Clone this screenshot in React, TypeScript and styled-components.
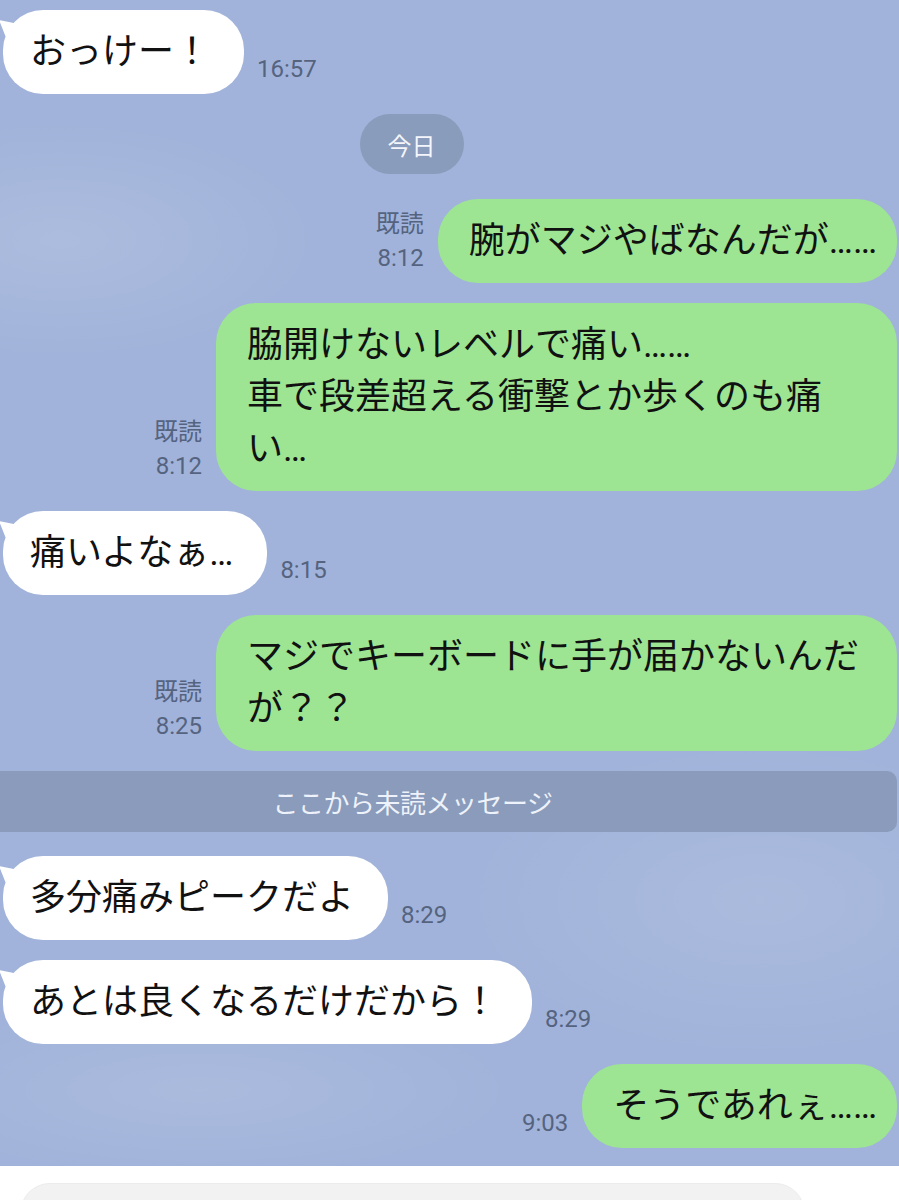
import React from 'react';
import styled, { createGlobalStyle } from 'styled-components';

const GlobalStyle = createGlobalStyle`
  html, body { margin: 0; padding: 0; background: #ffffff; }
  body { font-family: Roboto, "Noto Sans CJK JP", sans-serif; }
  * { box-sizing: border-box; }
`;

const Screen = styled.div`
  width: 899px;
  height: 1200px;
  overflow: hidden;
  display: flex;
  flex-direction: column;
  background: #ffffff;
`;

const Chat = styled.main`
  display: flex;
  flex-direction: column;
  gap: 20px;
  padding: 10px 0 18px;
  background:
    radial-gradient(ellipse 260px 120px at 60px 240px, rgba(255, 255, 255, 0.12), transparent),
    radial-gradient(ellipse 300px 160px at 760px 900px, rgba(255, 255, 255, 0.1), transparent),
    radial-gradient(ellipse 320px 90px at 200px 1090px, rgba(255, 255, 255, 0.1), transparent),
    #a1b3da;
`;

const Row = styled.div<{ $side: 'left' | 'right' }>`
  display: flex;
  align-items: flex-end;
  justify-content: ${(p) => (p.$side === 'left' ? 'flex-start' : 'flex-end')};
  gap: ${(p) => (p.$side === 'left' ? '13px' : '14px')};
  padding-right: ${(p) => (p.$side === 'right' ? '2px' : '0')};
`;

const Bubble = styled.div<{ $side: 'left' | 'right' }>`
  position: relative;
  max-width: 681px;
  font-size: 36px;
  line-height: 52px;
  color: #111111;
  border-radius: 40px;
  background: ${(p) => (p.$side === 'left' ? '#ffffff' : '#9de592')};
  margin-left: ${(p) => (p.$side === 'left' ? '3px' : '0')};
  padding: ${(p) => (p.$side === 'left' ? '16px 34px 16px 27px' : '16px 20px 16px 31px')};
  line-break: strict;

  ${(p) =>
    p.$side === 'left'
      ? `&::before {
          content: '';
          position: absolute;
          left: -4px;
          top: 10px;
          width: 16px;
          height: 16px;
          background: #ffffff;
          clip-path: polygon(0 0, 100% 20%, 100% 100%, 40% 100%);
        }`
      : ''}
`;

const Meta = styled.div`
  display: flex;
  flex-direction: column;
  align-items: flex-end;
  font-size: 24px;
  line-height: 34px;
  color: #55637f;
  margin-bottom: 8px;
  white-space: nowrap;
`;

const DateRow = styled.div`
  display: flex;
  justify-content: center;
  padding-right: 76px;
  margin-bottom: 5px;
`;

const DatePill = styled.div`
  width: 104px;
  height: 60px;
  border-radius: 30px;
  background: #8a9cbc;
  color: #f4f6fb;
  font-size: 24px;
  display: flex;
  align-items: center;
  justify-content: center;
`;

const Divider = styled.div`
  height: 61px;
  margin: 0 2px 4px 0;
  border-radius: 0 10px 10px 0;
  background: #8a9bbb;
  color: #eef2fa;
  font-size: 26px;
  letter-spacing: -0.5px;
  display: flex;
  align-items: center;
  justify-content: center;
  padding-right: 72px;
`;

const Footer = styled.footer`
  flex: 1;
  background: #ffffff;
  padding: 17px 94px 0 20px;
`;

const InputBox = styled.div`
  height: 60px;
  border-radius: 30px 30px 0 0;
  background: #f2f2f2;
  border: 1px solid #ececec;
`;

type Msg =
  | { kind: 'left'; text: string; time: string }
  | { kind: 'right'; text: string; time: string; read: boolean }
  | { kind: 'date'; text: string }
  | { kind: 'divider'; text: string };

const messages: Msg[] = [
  { kind: 'left', text: 'おっけー！', time: '16:57' },
  { kind: 'date', text: '今日' },
  { kind: 'right', text: '腕がマジやばなんだが……', time: '8:12', read: true },
  { kind: 'right', text: '脇開けないレベルで痛い……\n車で段差超える衝撃とか歩くのも痛い…', time: '8:12', read: true },
  { kind: 'left', text: '痛いよなぁ…', time: '8:15' },
  { kind: 'right', text: 'マジでキーボードに手が届かないんだが？？', time: '8:25', read: true },
  { kind: 'divider', text: 'ここから未読メッセージ' },
  { kind: 'left', text: '多分痛みピークだよ', time: '8:29' },
  { kind: 'left', text: 'あとは良くなるだけだから！', time: '8:29' },
  { kind: 'right', text: 'そうであれぇ……', time: '9:03', read: false },
];

const Text: React.FC<{ text: string }> = ({ text }) => (
  <>
    {text.split('\n').map((line, i) => (
      <React.Fragment key={i}>
        {i > 0 && <br />}
        {line}
      </React.Fragment>
    ))}
  </>
);

export default function App() {
  return (
    <>
      <GlobalStyle />
      <Screen>
        <Chat>
          {messages.map((m, i) => {
            if (m.kind === 'date') {
              return (
                <DateRow key={i}>
                  <DatePill>{m.text}</DatePill>
                </DateRow>
              );
            }
            if (m.kind === 'divider') {
              return <Divider key={i}>{m.text}</Divider>;
            }
            if (m.kind === 'left') {
              return (
                <Row key={i} $side="left">
                  <Bubble $side="left">
                    <Text text={m.text} />
                  </Bubble>
                  <Meta>{m.time}</Meta>
                </Row>
              );
            }
            return (
              <Row key={i} $side="right">
                <Meta>
                  {m.read && <span>既読</span>}
                  <span>{m.time}</span>
                </Meta>
                <Bubble $side="right">
                  <Text text={m.text} />
                </Bubble>
              </Row>
            );
          })}
        </Chat>
        <Footer>
          <InputBox />
        </Footer>
      </Screen>
    </>
  );
}
